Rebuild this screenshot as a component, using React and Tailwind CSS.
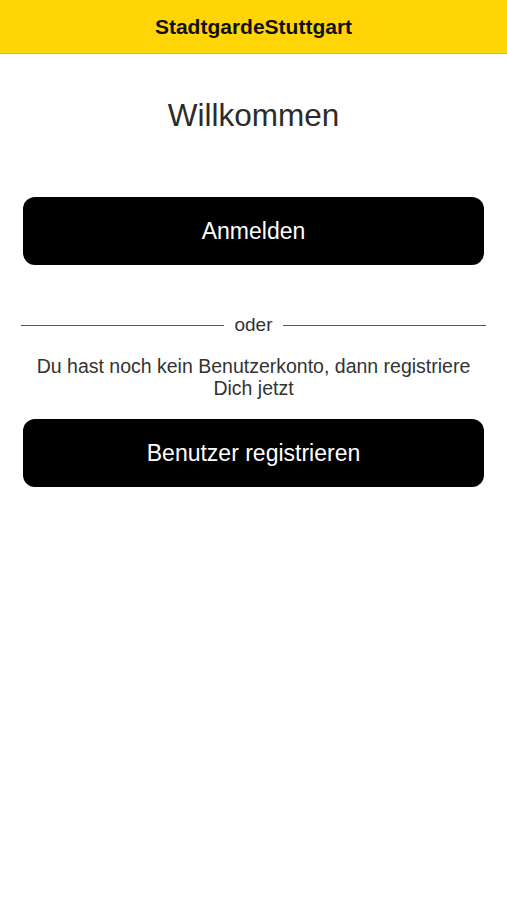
export default function App() {
    return (
        <div className="min-h-[900px] bg-white" style={{ fontFamily: '"Liberation Sans", Arial, sans-serif' }}>
            <header className="h-[54px] flex items-center justify-center bg-[#ffd506] border-b border-[#e0bb10]">
                <h1 className="text-[21px] font-bold text-[#111]">StadtgardeStuttgart</h1>
            </header>
            <main className="px-[23px] flex flex-col">
                <h2 className="mt-[42px] text-center text-[31.5px] text-[#2b2b2b] leading-[38px]">Willkommen</h2>
                <button className="mt-[63px] h-[68px] w-full rounded-[12px] bg-black text-white text-[23px]">
                    Anmelden
                </button>
                <div className="mt-[49px] -mx-[2px] flex items-center gap-[10px]">
                    <div className="flex-1 h-px bg-[#555]"></div>
                    <span className="text-[19px] text-[#333] leading-[22px]">oder</span>
                    <div className="flex-1 h-px bg-[#555]"></div>
                </div>
                <p className="mt-[19px] px-[6px] text-center text-[19.5px] leading-[22px] text-[#333]">
                    Du hast noch kein Benutzerkonto, dann registriere Dich jetzt
                </p>
                <button className="mt-[20px] h-[68px] w-full rounded-[12px] bg-black text-white text-[23px]">
                    Benutzer registrieren
                </button>
            </main>
        </div>
    );
}
